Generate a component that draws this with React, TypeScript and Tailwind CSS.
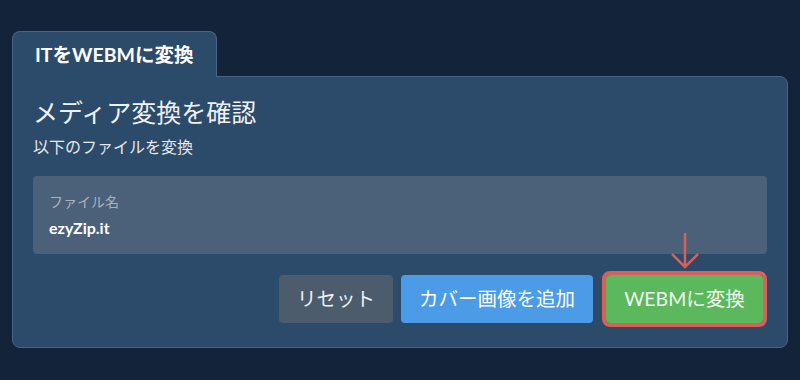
export default function App() {
  const font = { fontFamily: 'Lato, "Noto Sans CJK JP", sans-serif' }
  return (
    <div
      className="h-[380px] w-[800px] bg-[#12233a] px-3 pt-[31px] text-white"
      style={font}
    >
      <div className="relative z-10 -mb-px flex h-[46px] w-[205px] items-center rounded-t-lg border border-b-0 border-[#4a6583] bg-[#2c4a6a] px-[22px]">
        <span className="text-[19.5px] font-bold">ITをWEBMに変換</span>
      </div>
      <div className="rounded-tr-lg rounded-b-lg border border-[#4a6583] bg-[#2c4a6a] px-5 pt-[18px] pb-[24px]">
        <h1 className="text-[25px] leading-[34px] font-normal text-[#eef1f4]">メディア変換を確認</h1>
        <p className="mt-[7px] text-[16px] leading-[22px] text-[#e4e8ec]">以下のファイルを変換</p>
        <div className="mt-[18px] h-[78px] rounded bg-[#4b6079] px-4 pt-[16px]">
          <div className="text-[14px] leading-5 text-[#a9b3be]">ファイル名</div>
          <div className="mt-[6px] text-[16px] leading-5 font-bold">ezyZip.it</div>
        </div>
        <div className="mt-[21px] flex justify-end">
          <button className="h-12 w-[114px] rounded bg-[#4c5c6c] text-[19.5px] text-[#eef1f4]">
            リセット
          </button>
          <button className="ml-2 h-12 w-[192px] rounded bg-[#4b9be6] text-[19.5px] text-white">
            カバー画像を追加
          </button>
          <div className="relative mr-1 ml-[13px]">
            <svg
              className="absolute -top-[42px] left-[64px]"
              width="30"
              height="36"
              viewBox="0 0 30 36"
              fill="none"
              stroke="#d9605a"
              strokeWidth="2.5"
            >
              <path d="M15 0 V34 M2 21 L15 34 L28 21" />
            </svg>
            <button className="h-12 w-[157px] rounded bg-[#5cb85c] text-[19.5px] text-[#f2f8f2] outline-4 outline-[#d9605a]">
              WEBMに変換
            </button>
          </div>
        </div>
      </div>
    </div>
  )
}
